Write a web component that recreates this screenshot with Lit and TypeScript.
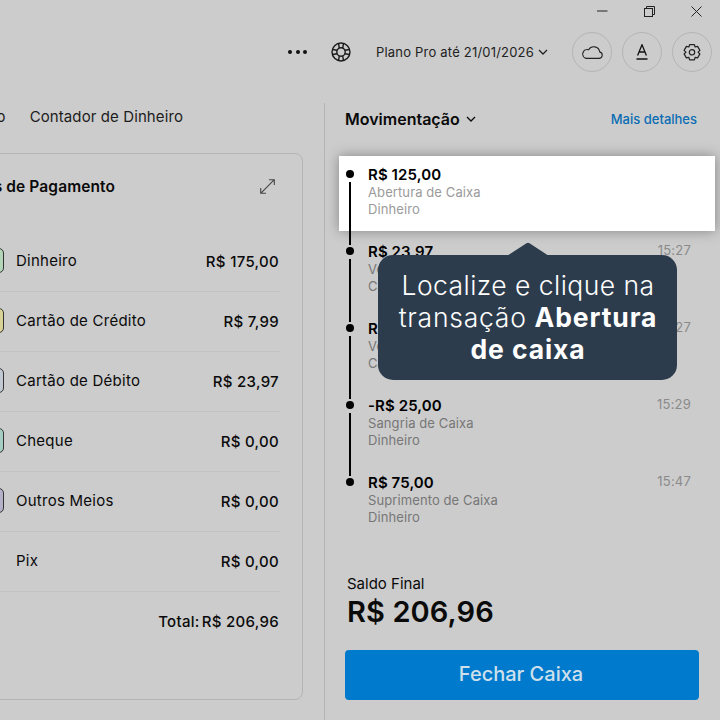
import { LitElement, html, css, svg } from 'lit';
import { customElement } from 'lit/decorators.js';

const PAYMENTS = [
  { name: 'Dinheiro', value: 'R$ 175,00', tone: 'green' },
  { name: 'Cartão de Crédito', value: 'R$ 7,99', tone: 'yellow' },
  { name: 'Cartão de Débito', value: 'R$ 23,97', tone: 'blue' },
  { name: 'Cheque', value: 'R$ 0,00', tone: 'teal' },
  { name: 'Outros Meios', value: 'R$ 0,00', tone: 'purple' },
  { name: 'Pix', value: 'R$ 0,00', tone: 'none' },
];

const MOVES = [
  { amount: 'R$ 125,00', kind: 'Abertura de Caixa', method: 'Dinheiro', time: '', open: true },
  { amount: 'R$ 23,97', kind: 'Venda', method: 'Cartão de Débito', time: '15:27' },
  { amount: 'R$ 7,99', kind: 'Venda', method: 'Cartão de Crédito', time: '15:27' },
  { amount: '-R$ 25,00', kind: 'Sangria de Caixa', method: 'Dinheiro', time: '15:29' },
  { amount: 'R$ 75,00', kind: 'Suprimento de Caixa', method: 'Dinheiro', time: '15:47', last: true },
];

const chevron = svg`<path d="M1 1l4 4 4-4" fill="none" stroke="currentColor" stroke-width="1.3"/>`;

@customElement('app-root')
export class AppRoot extends LitElement {
  static styles = css`
    :host {
      display: block;
      width: 720px;
      height: 720px;
      overflow: hidden;
      background: #cccccc;
      color: #0a0a0a;
      font-family: Inter, 'Liberation Sans', sans-serif;
    }

    .window {
      display: flex;
      justify-content: flex-end;
      align-items: center;
      height: 22px;
      gap: 36px;
      padding-right: 18px;
    }

    .window svg {
      display: block;
    }

    .topbar {
      display: flex;
      justify-content: flex-end;
      align-items: center;
      height: 40px;
      margin-top: 10px;
      padding-right: 8px;
    }

    .dots {
      display: flex;
      gap: 3.5px;
      margin-right: 24px;
    }

    .dots i {
      width: 4px;
      height: 4px;
      border-radius: 50%;
      background: #111;
    }

    .plan {
      display: flex;
      align-items: center;
      gap: 4px;
      margin: 0 14px 0 25px;
      font-size: 13px;
      letter-spacing: 0.2px;
      color: #222;
    }

    .round {
      display: flex;
      align-items: center;
      justify-content: center;
      box-sizing: border-box;
      width: 40px;
      height: 40px;
      border: 1px solid #b4b4b4;
      border-radius: 50%;
      margin-left: 10px;
    }

    .main {
      display: flex;
      height: 617px;
      margin-top: 31px;
    }

    .left {
      box-sizing: border-box;
      width: 325px;
      flex: none;
      border-right: 1px solid #b4b4b4;
      overflow: hidden;
    }

    .tabs {
      display: flex;
      gap: 24px;
      justify-content: flex-end;
      width: 183px;
      margin-top: 4px;
      height: 20px;
      line-height: 20px;
      font-size: 15px;
      letter-spacing: 0.1px;
      color: #1c1c1c;
      white-space: nowrap;
    }

    .card {
      box-sizing: border-box;
      width: 343px;
      height: 547px;
      margin: 26px 0 0 -40px;
      padding: 0 22px 0 19px;
      border: 1px solid #b4b4b4;
      border-radius: 8px;
    }

    .card-head {
      display: flex;
      justify-content: space-between;
      align-items: center;
      height: 65px;
      margin-bottom: 13px;
      padding-right: 5px;
    }

    .card-head b {
      font-size: 15.5px;
      font-weight: 600;
      letter-spacing: 0.1px;
      margin-left: -34px;
      white-space: nowrap;
    }

    .pay {
      display: flex;
      align-items: center;
      box-sizing: border-box;
      height: 60px;
      border-bottom: 1px solid #c2c2c2;
      font-size: 15px;
      letter-spacing: 0.25px;
      padding-right: 1px;
    }

    .swatch {
      box-sizing: border-box;
      width: 24px;
      height: 25px;
      margin: -3px 12px 0 0;
      border: 1px solid #333;
      border-radius: 5px;
    }

    .swatch.green { background: #b4d6b8; }
    .swatch.yellow { background: #d8d297; }
    .swatch.blue { background: #c3c9d2; }
    .swatch.teal { background: #a6cdc4; }
    .swatch.purple { background: #b5b1c9; }
    .swatch.none { border: none; }

    .pay .name {
      flex: 1;
      margin-top: -3px;
    }

    .pay .value {
      font-weight: 500;
      letter-spacing: 0.3px;
    }

    .total {
      display: flex;
      justify-content: flex-end;
      gap: 2px;
      margin-top: 20px;
      padding-right: 1px;
      font-size: 15px;
      font-weight: 500;
      letter-spacing: 0.3px;
    }

    .right {
      flex: 1;
      min-width: 0;
      padding: 6px 21px 0 20px;
    }

    .right-head {
      display: flex;
      justify-content: space-between;
      align-items: center;
      height: 20px;
      margin-bottom: 27px;
    }

    .right-head b {
      display: flex;
      align-items: center;
      gap: 6px;
      font-size: 16px;
      font-weight: 600;
    }

    .right-head a {
      font-size: 13px;
      font-weight: 500;
      color: #0a6cb4;
      margin-right: 2px;
    }

    .moves {
      position: relative;
      height: 415px;
      margin: 0 -16px 0 -6px;
    }

    .move {
      display: flex;
      height: 77px;
      box-sizing: border-box;
      padding: 9px 24px 0 7px;
    }

    .move.open {
      height: 75px;
      margin-bottom: 2px;
      background: #fff;
      box-shadow: 0 0 12px rgba(0, 0, 0, 0.35);
    }

    .rail {
      display: flex;
      flex-direction: column;
      align-items: center;
      flex: none;
      width: 8px;
      height: 80px;
      margin-right: 14px;
      padding-top: 5px;
    }

    .rail i {
      width: 8px;
      height: 8px;
      flex: none;
      border-radius: 50%;
      background: #000;
    }

    .rail span {
      width: 2px;
      height: 63px;
      flex: none;
      margin-top: 4px;
      background: #000;
    }

    .info {
      flex: 1;
      font-size: 13px;
      line-height: 17px;
      letter-spacing: 0.1px;
      color: #777;
    }

    .open .info {
      color: #9a9a9a;
    }

    .amount {
      font-size: 15px;
      line-height: 19px;
      font-weight: 600;
      letter-spacing: 0.1px;
      color: #000;
    }

    .time {
      margin-top: -1px;
      font-size: 13px;
      line-height: 18px;
      letter-spacing: 0.2px;
      color: #8a8a8a;
    }

    .hint {
      position: absolute;
      left: 39px;
      top: 99px;
      box-sizing: border-box;
      width: 299px;
      height: 125px;
      padding: 14px 0 0 1px;
      border-radius: 15px;
      background: #2d3c4c;
      color: #fff;
      font-size: 26.5px;
      font-weight: 300;
      line-height: 32px;
      text-align: center;
      letter-spacing: 0.45px;
      white-space: nowrap;
    }

    .hint em {
      font-style: normal;
      letter-spacing: 0.75px;
    }

    .hint b {
      font-weight: 700;
      letter-spacing: 0.9px;
    }

    .hint svg {
      position: absolute;
      left: 129px;
      top: -13px;
    }

    .balance {
      margin: 4px 0 0 2px;
      font-size: 15px;
      line-height: 18px;
    }

    .balance strong {
      display: block;
      margin-top: 1px;
      font-size: 29px;
      line-height: 36px;
      font-weight: 600;
      letter-spacing: 0.1px;
    }

    .close {
      display: block;
      width: 100%;
      height: 50px;
      margin-top: 20px;
      padding: 0 2px 2px 0;
      border: none;
      border-radius: 4px;
      background: #007acc;
      color: #cfe0ec;
      font: 500 20px Inter, 'Liberation Sans', sans-serif;
    }
  `;

  render() {
    return html`
      <div class="window">
        <svg width="11" height="2" viewBox="0 0 11 2"><path d="M0 1h10.5" stroke="#222" /></svg>
        <svg width="11" height="11" viewBox="0 0 11 11" fill="none" stroke="#222">
          <rect x=".5" y="2.5" width="8" height="8" />
          <path d="M2.5 2.5v-2h8v8h-2" />
        </svg>
        <svg width="11" height="11" viewBox="0 0 11 11"><path d="M.5.5l10 10M10.5.5l-10 10" stroke="#222" /></svg>
      </div>

      <div class="topbar">
        <div class="dots"><i></i><i></i><i></i></div>
        <svg width="20" height="20" viewBox="0 0 20 20" fill="none" stroke="#1a1a1a" stroke-width="1.4">
          <circle cx="10" cy="10" r="9" />
          <circle cx="10" cy="10" r="4.2" />
          <path d="M8.3 6.16L7.5 1.35M11.7 6.16l.8-4.81M13.84 8.3l4.81-.8M13.84 11.7l4.81.8M8.3 13.84l-.8 4.81M11.7 13.84l.8 4.81M6.16 8.3l-4.81-.8M6.16 11.7l-4.81.8" />
        </svg>
        <div class="plan">
          Plano Pro até 21/01/2026
          <svg width="10" height="7" viewBox="0 0 10 7">${chevron}</svg>
        </div>
        <div class="round">
          <svg width="22" height="14" viewBox="0 0 22 14" fill="none" stroke="#222" stroke-width="1.1">
            <path d="M5 13.4h13a3.3 3.3 0 0 0 .7-6.5A6 6 0 0 0 7.6 4.7 4.4 4.4 0 0 0 5 13.4z" />
          </svg>
        </div>
        <div class="round">
          <svg width="12" height="16" viewBox="0 0 12 16" fill="none" stroke="#111" stroke-width="1.3">
            <path d="M1.6 11.5L6 .8l4.4 10.7M3 8h6M.5 15h11" />
          </svg>
        </div>
        <div class="round">
          <svg width="18" height="19" viewBox="0 0 18 19" fill="none" stroke="#222" stroke-width="1.2">
            <path d="M6.6 1.6h4.8l.7 2.4 2.5-.6 2.3 4-1.8 1.8 1.8 1.7-2.3 4-2.5-.6-.7 2.5H6.6l-.7-2.5-2.5.6-2.3-4 1.8-1.7-1.8-1.8 2.3-4 2.5.6z" stroke-linejoin="round" />
            <circle cx="9" cy="9.3" r="2.7" />
          </svg>
        </div>
      </div>

      <div class="main">
        <section class="left">
          <div class="tabs"><span>Resumo</span><span>Contador de Dinheiro</span></div>
          <div class="card">
            <div class="card-head">
              <b>Formas de Pagamento</b>
              <svg width="15" height="15" viewBox="0 0 15 15" fill="none" stroke="#444" stroke-width="1.1">
                <path d="M9 .7h5.3V6M14.3.7L.7 14.3M.7 9v5.3H6" />
              </svg>
            </div>
            ${PAYMENTS.map(
              (p) => html`
                <div class="pay">
                  <span class="swatch ${p.tone}"></span>
                  <span class="name">${p.name}</span>
                  <span class="value">${p.value}</span>
                </div>
              `,
            )}
            <div class="total"><span>Total:</span><span>R$ 206,96</span></div>
          </div>
        </section>

        <section class="right">
          <div class="right-head">
            <b>Movimentação <svg width="10" height="7" viewBox="0 0 10 7">${chevron}</svg></b>
            <a>Mais detalhes</a>
          </div>

          <div class="moves">
            ${MOVES.map(
              (m) => html`
                <div class="move ${m.open ? 'open' : ''}">
                  <div class="rail"><i></i>${m.last ? '' : html`<span></span>`}</div>
                  <div class="info">
                    <div class="amount">${m.amount}</div>
                    <div>${m.kind}</div>
                    <div>${m.method}</div>
                  </div>
                  <div class="time">${m.time}</div>
                </div>
              `,
            )}
            <div class="hint">
              <svg width="42" height="14" viewBox="0 0 42 14"><path d="M0 14L19.5 1.2q1.5-1 3 0L42 14z" fill="#2d3c4c" /></svg>
              Localize e clique na<br /><em>transação</em> <b>Abertura<br />de caixa</b>
            </div>
          </div>

          <div class="balance">
            Saldo Final
            <strong>R$ 206,96</strong>
          </div>
          <button class="close">Fechar Caixa</button>
        </section>
      </div>
    `;
  }
}
